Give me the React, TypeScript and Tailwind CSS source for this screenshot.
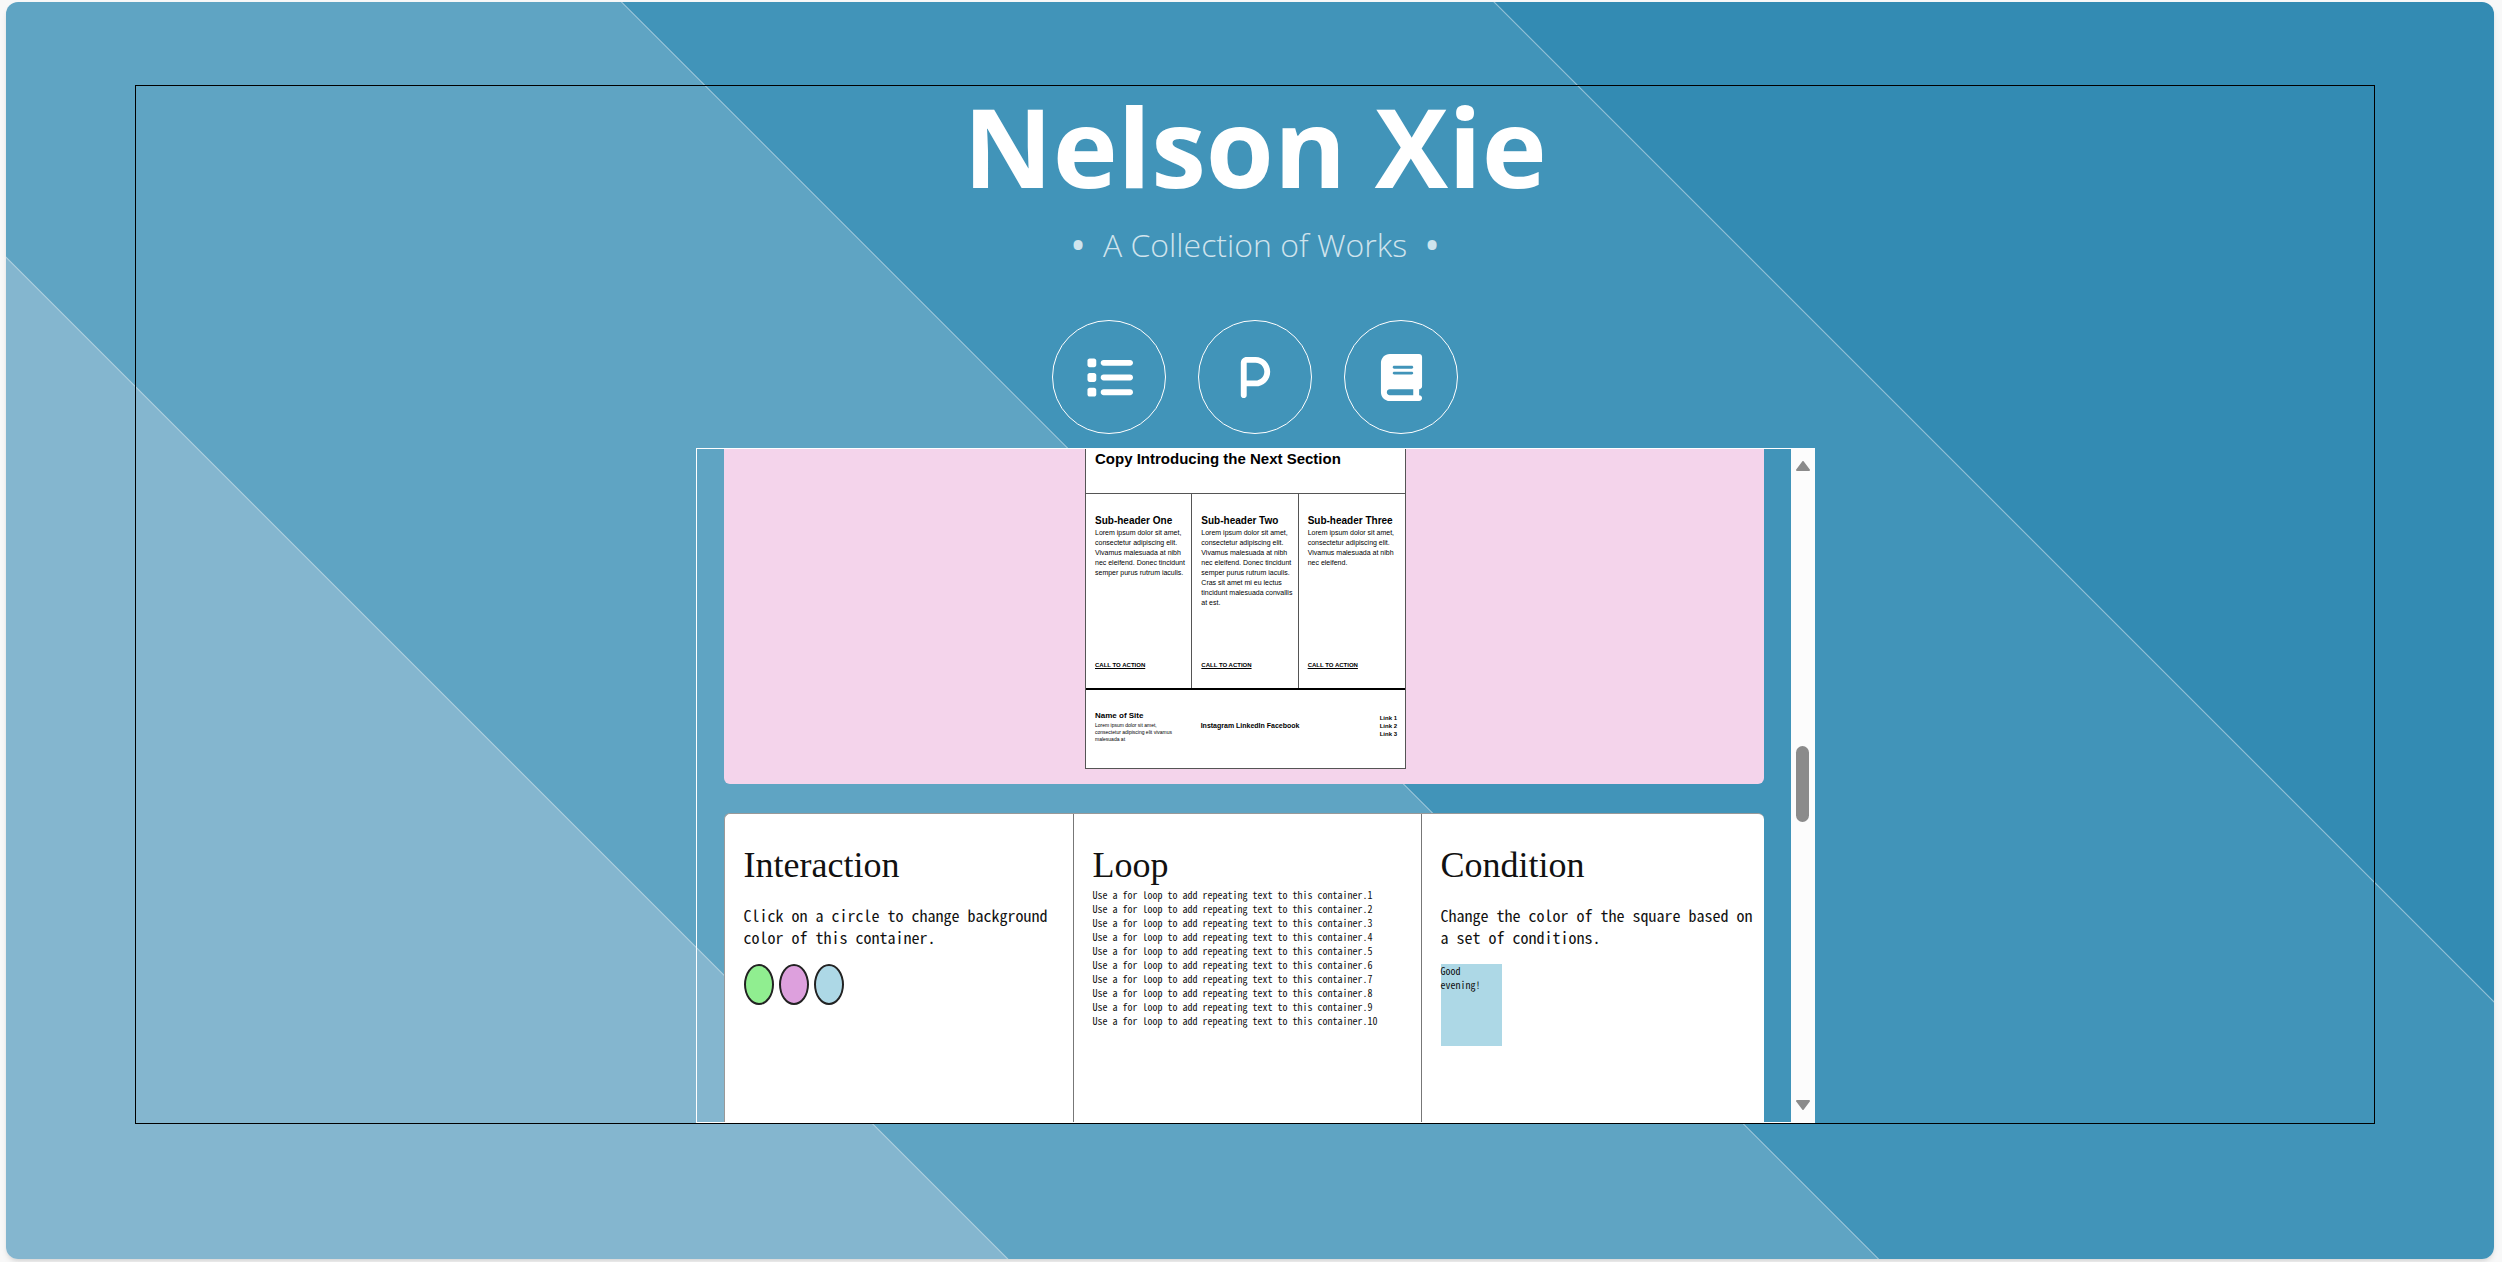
import React from "react";
import { FaBook, FaList, FaP } from "react-icons/fa6";

const navLinks = [
  { label: "List of works", Icon: FaList },
  { label: "Projects", Icon: FaP },
  { label: "Journal", Icon: FaBook },
];

const teasers = [
  {
    title: "Sub-header One",
    lines: ["Lorem ipsum dolor sit amet,", "consectetur adipiscing elit.", "Vivamus malesuada at nibh", "nec eleifend. Donec tincidunt", "semper purus rutrum iaculis."],
  },
  {
    title: "Sub-header Two",
    lines: ["Lorem ipsum dolor sit amet,", "consectetur adipiscing elit.", "Vivamus malesuada at nibh", "nec eleifend. Donec tincidunt", "semper purus rutrum iaculis.", "Cras sit amet mi eu lectus", "tincidunt malesuada convallis", "at est."],
  },
  {
    title: "Sub-header Three",
    lines: ["Lorem ipsum dolor sit amet,", "consectetur adipiscing elit.", "Vivamus malesuada at nibh", "nec eleifend."],
  },
];

const swatches = [
  { name: "green", tone: "bg-[#90ee90]" },
  { name: "plum", tone: "bg-[#dda0dd]" },
  { name: "blue", tone: "bg-[#add8e6]" },
];

function Wireframe() {
  return (
    <div className="w-[321px] border border-t-0 border-[#555] bg-white font-['Liberation_Sans',sans-serif] text-black">
      <h2 className="h-[44px] px-[9px] text-[15px] leading-[20px] font-bold whitespace-nowrap">Copy Introducing the Next Section</h2>
      <div className="grid h-[197px] grid-cols-3 divide-x divide-[#555] border-t border-b-2 border-[#555] border-b-black">
        {teasers.map(({ title, lines }) => (
          <article key={title} className="flex flex-col pt-[20px] pb-[18px] pl-[9px] whitespace-nowrap">
            <h3 className="text-[10px] leading-[14px] font-bold">{title}</h3>
            {lines.map((line) => (
              <p key={line} className="text-[7px] leading-[10px]">{line}</p>
            ))}
            <a href="#action" className="mt-auto text-[6px] leading-[10px] font-bold underline">CALL TO ACTION</a>
          </article>
        ))}
      </div>
      <footer className="grid h-[78px] grid-cols-3 items-start pt-[20px] pr-[8px] pl-[9px] whitespace-nowrap">
        <div>
          <h3 className="text-[8px] leading-[12px] font-bold">Name of Site</h3>
          <p className="text-[5px] leading-[7px]">Lorem ipsum dolor sit amet,<br />consectetur adipiscing elit vivamus<br />malesuada at</p>
        </div>
        <p className="pt-[10px] pl-[5px] text-[7px] leading-[12px] font-bold">Instagram LinkedIn Facebook</p>
        <ul className="pt-[4px] text-right text-[6px] leading-[8px] font-bold">
          <li>Link 1</li>
          <li>Link 2</li>
          <li>Link 3</li>
        </ul>
      </footer>
    </div>
  );
}

function Exercise({ title, children }: { title: string; children: React.ReactNode }) {
  return (
    <section className="pt-[28px] pl-[19px]">
      <h2 className="h-[46px] font-['Liberation_Serif',serif] text-[36px] leading-[46px]">{title}</h2>
      {children}
    </section>
  );
}

function Exercises() {
  return (
    <div className="mt-[29px] grid min-h-0 flex-1 grid-cols-[349fr_348fr_342fr] divide-x divide-[#777] rounded-t-md border-t border-l border-t-[#999] border-l-[#999] bg-white font-['Noto_Sans_Mono_CJK_SC','Liberation_Mono',monospace] whitespace-nowrap text-[#111]">
      <Exercise title="Interaction">
        <p className="mt-[16px] text-base leading-[22px]">Click on a circle to change background<br />color of this container.</p>
        <div className="mt-[16px] flex gap-[5px]">
          {swatches.map(({ name, tone }) => (
            <button key={name} type="button" aria-label={`Use ${name} background`} className={`h-[41px] w-[30px] rounded-[50%] border-2 border-[#222] ${tone}`} />
          ))}
        </div>
      </Exercise>
      <Exercise title="Loop">
        <ol className="text-[10px] leading-[14px]">
          {Array.from({ length: 10 }, (_, i) => (
            <li key={i}>Use a for loop to add repeating text to this container.{i + 1}</li>
          ))}
        </ol>
      </Exercise>
      <Exercise title="Condition">
        <p className="mt-[16px] text-base leading-[22px]">Change the color of the square based on<br />a set of conditions.</p>
        <div className="mt-[16px] h-[82px] w-[61px] bg-[#add8e6] text-[10px] leading-[14px]">Good<br />evening!</div>
      </Exercise>
    </div>
  );
}

function ScrollTrack() {
  return (
    <div className="flex w-[24px] shrink-0 flex-col items-center bg-[#fcfcfc] py-[12px]">
      <svg viewBox="0 0 14 10" className="h-[10px] w-[14px]" fill="#8b8b8b" stroke="#8b8b8b" strokeWidth="2" strokeLinejoin="round"><path d="M7 1 13 9H1Z" /></svg>
      <div className="flex flex-1 flex-col items-center">
        <div className="flex-[275]" />
        <div className="h-[76px] w-[13px] rounded-full bg-[#8b8b8b]" />
        <div className="flex-[278]" />
      </div>
      <svg viewBox="0 0 14 10" className="h-[10px] w-[14px]" fill="#8b8b8b" stroke="#8b8b8b" strokeWidth="2" strokeLinejoin="round"><path d="M7 9 1 1H13Z" /></svg>
    </div>
  );
}

export default function App() {
  return (
    <div className="min-h-screen bg-[#f8f8f8] pt-[2px] pr-[8px] pb-[3px] pl-[6px]">
      <main className="flex h-[calc(100vh-5px)] flex-col rounded-xl bg-[linear-gradient(45deg,#84b6cf_calc(26.75%_-_1px),#b3d3e1_26.75%,#5fa4c3_calc(26.75%_+_1px),#5fa4c3_calc(50%_-_1px),#a5cbdd_50%,#4194b9_calc(50%_+_1px),#4194b9_calc(73.3%_-_1px),#93c1d7_73.3%,#338bb3_calc(73.3%_+_1px))] pt-[83px] pr-[119px] pb-[135px] pl-[129px] shadow-md">
        <div className="flex min-h-0 flex-1 flex-col items-center border border-black font-['Open_Sans',sans-serif] text-white">
          <h1 className="h-[132px] text-[110px] leading-[118px] font-bold">Nelson Xie</h1>
          <p className="flex gap-[19px] text-[32px] leading-[54px] font-light text-white/75">
            <span className="font-bold">•</span>
            <span>A Collection of Works</span>
            <span className="font-bold">•</span>
          </p>
          <nav className="mt-[48px] flex gap-[32px]">
            {navLinks.map(({ label, Icon }) => (
              <a key={label} href="#works" aria-label={label} className="flex size-[114px] items-center justify-center rounded-full border border-white">
                <Icon size={47} />
              </a>
            ))}
          </nav>
          <div className="mt-[14px] flex min-h-0 w-1/2 flex-1 border border-r-0 border-white">
            <div className="flex min-w-0 flex-1 flex-col overflow-hidden px-[27px]">
              <div className="flex justify-center rounded-b-md bg-[#f4d4eb] pb-[15px] pl-[4px]">
                <Wireframe />
              </div>
              <Exercises />
            </div>
            <ScrollTrack />
          </div>
        </div>
      </main>
    </div>
  );
}
